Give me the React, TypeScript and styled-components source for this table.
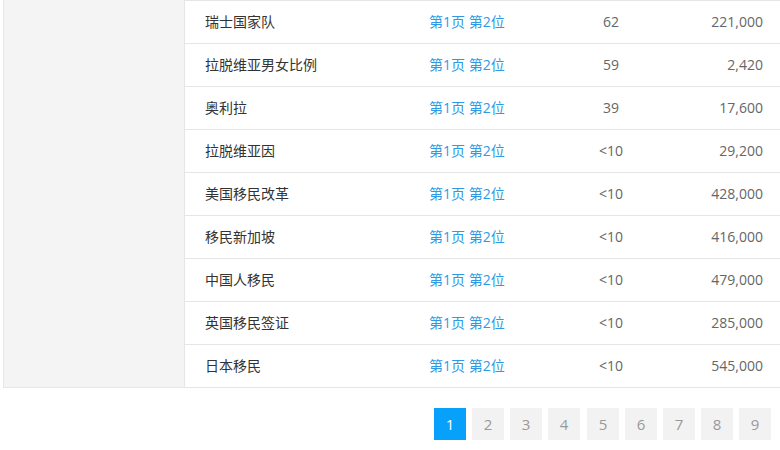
import React from "react";
import styled, { createGlobalStyle } from "styled-components";

const Global = createGlobalStyle`
  html, body { margin: 0; padding: 0; background: #fff; }
  body { font-family: "Open Sans", "Noto Sans CJK SC", sans-serif; font-size: 14px; overflow: hidden; }
`;

const Page = styled.div`
  width: 780px;
  height: 450px;
  display: flex;
  flex-direction: column;
`;

const Panel = styled.div`
  display: flex;
  margin-left: 3px;
  border-left: 1px solid #e6e6e6;
  border-bottom: 1px solid #e6e6e6;
`;

const Sidebar = styled.div`
  width: 180px;
  background: #f4f4f4;
  border-right: 1px solid #e6e6e6;
`;

const Table = styled.div`
  flex: 1;
  border-top: 1px solid #e6e6e6;
  background: #fff;
`;

const Row = styled.div<{ $last?: boolean }>`
  display: grid;
  grid-template-columns: 224px 142px 120px 1fr;
  box-sizing: border-box;
  padding-bottom: 1px;
  align-items: center;
  line-height: 18px;
  border-bottom: ${(p) => (p.$last ? "none" : "1px solid #e6e6e6")};
  height: ${(p) => (p.$last ? "42px" : "43px")};
`;

const Name = styled.div`
  padding-left: 20px;
  padding-bottom: 1px;
  color: #333;
  font-family: "Noto Sans CJK SC", sans-serif;
  font-size: 14px;
`;

const Link = styled.a`
  padding-left: 20px;
  color: #2e9ae6;
  font-family: "Open Sans", "Noto Sans CJK SC", sans-serif;
  font-size: 14px;
  text-decoration: none;
  white-space: nowrap;
`;

const Count = styled.div`
  text-align: center;
  color: #666;
`;

const Value = styled.div`
  text-align: right;
  padding-right: 17px;
  color: #666;
`;

const Pager = styled.div`
  display: flex;
  justify-content: flex-end;
  gap: 6px;
  padding-right: 9px;
  margin-top: 20px;
`;

const PageBtn = styled.a<{ $active?: boolean }>`
  width: 32px;
  height: 32px;
  display: flex;
  align-items: center;
  justify-content: center;
  font-size: 15px;
  background: ${(p) => (p.$active ? "#07a0fb" : "#f2f2f2")};
  color: ${(p) => (p.$active ? "#fff" : "#999")};
  cursor: pointer;
  &:nth-child(4) { margin-right: 1px; }
`;

const rows = [
  ["瑞士国家队", "62", "221,000"],
  ["拉脱维亚男女比例", "59", "2,420"],
  ["奥利拉", "39", "17,600"],
  ["拉脱维亚因", "<10", "29,200"],
  ["美国移民改革", "<10", "428,000"],
  ["移民新加坡", "<10", "416,000"],
  ["中国人移民", "<10", "479,000"],
  ["英国移民签证", "<10", "285,000"],
  ["日本移民", "<10", "545,000"],
];

export default function App() {
  return (
    <Page>
      <Global />
      <Panel>
        <Sidebar />
        <Table>
          {rows.map(([n, c, v], i) => (
            <Row key={n} $last={i === rows.length - 1}>
              <Name>{n}</Name>
              <Link>第1页 第2位</Link>
              <Count>{c}</Count>
              <Value>{v}</Value>
            </Row>
          ))}
        </Table>
      </Panel>
      <Pager>
        {[1, 2, 3, 4, 5, 6, 7, 8, 9].map((n) => (
          <PageBtn key={n} $active={n === 1}>{n}</PageBtn>
        ))}
      </Pager>
    </Page>
  );
}
